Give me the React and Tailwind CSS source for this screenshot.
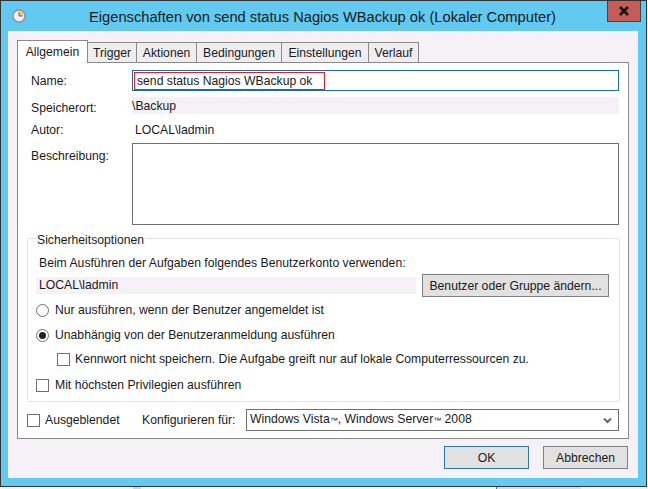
import React from 'react';

const tabs = [
  { name: 'Trigger', width: 'w-[50px]' },
  { name: 'Aktionen', width: 'w-[61px]' },
  { name: 'Bedingungen', width: 'w-[86px]' },
  { name: 'Einstellungen', width: 'w-[88px]' },
  { name: 'Verlauf', width: 'w-[51px]' },
];

function ClockIcon() {
  return (
    <svg width="14" height="14" viewBox="0 0 14 14" className="shrink-0">
      <circle cx="7" cy="7" r="6" fill="#eef1f4" stroke="#8d929b" strokeWidth="1.4" />
      <path d="M7 7V2.4A4.6 4.6 0 0 1 11.6 7Z" fill="#f2c764" />
      <path d="M7 3V7H10.5" fill="none" stroke="#6f6a55" strokeWidth="1" />
    </svg>
  );
}

function CloseIcon() {
  return (
    <svg width="12" height="10" viewBox="0 0 12 10">
      <path d="M2 1L10 9M10 1L2 9" fill="none" stroke="#111" strokeWidth="2.6" />
    </svg>
  );
}

function Radio({ checked }) {
  return (
    <span className="w-[13px] h-[13px] rounded-full border border-[#707070] bg-white flex items-center justify-center shrink-0">
      {checked && <span className="w-[7px] h-[7px] rounded-full bg-[#222]" />}
    </span>
  );
}

function Checkbox() {
  return <span className="w-[13px] h-[13px] border border-[#707070] bg-white shrink-0" />;
}

function Label({ children }) {
  return <div className="w-[116px] pl-[13px] shrink-0">{children}</div>;
}

export default function App() {
  return (
    <div className="w-[648px] h-[489px] overflow-hidden bg-[#f3f3f3] text-[12.2px] leading-[16px] text-[#1a1a1a] font-['Liberation_Sans',Arial,sans-serif]">
      <div className="w-[647px] h-[487px] border border-[#333] bg-[#62c9f0] flex flex-col">
        {/* Titelleiste */}
        <div className="h-[30px] flex items-center shrink-0 pl-[11px]">
          <ClockIcon />
          <div className="flex-1 text-center text-[14.7px] leading-[20px] pl-[14px] pr-[2px] pt-[1px]">
            Eigenschaften von send status Nagios WBackup ok (Lokaler Computer)
          </div>
          <div className="w-[34px] h-[21px] mr-[5px] self-start bg-[#c75b55] border border-[#444] border-t-0 flex items-center justify-center">
            <CloseIcon />
          </div>
        </div>

        {/* Inhalt */}
        <div className="flex-1 ml-[7px] mr-[8px] mb-[8px] bg-[#f5f1f6] px-[9px] pt-[9px] flex flex-col">
          <div className="flex items-end h-[23px] relative z-10">
            <div className="w-[71px] h-[23px] bg-white border border-b-0 border-[#8a8a8a] flex items-center justify-center">
              Allgemein
            </div>
            {tabs.map((tab) => (
              <div
                key={tab.name}
                className={`${tab.width} h-[21px] bg-[#f0edf1] border border-[#8a8a8a] -ml-px pt-[1px] flex items-center justify-center`}
              >
                {tab.name}
              </div>
            ))}
          </div>

          <div className="h-[377px] -mt-px bg-white border border-[#8a8a8a] pt-[7px] flex flex-col">
            <div className="flex items-center h-[21px]">
              <Label>Name:</Label>
              <div className="w-[487px] -ml-[2px] h-[21px] border border-[#1d6a9c] px-px pt-[1px]">
                <div className="w-[191px] h-[18px] border border-[#e3202a] pl-[2px] leading-[16px]">
                  send status Nagios WBackup ok
                </div>
              </div>
            </div>
            <div className="flex items-center h-[17px] mt-[6px]">
              <div className="w-[116px] pl-[13px] pt-[5px] shrink-0">Speicherort:</div>
              <div className="w-[487px] -ml-[2px] h-[17px] bg-[#f5f1f6] pt-[1px]">\Backup</div>
            </div>
            <div className="flex items-center h-[16px] mt-[8px]">
              <Label>Autor:</Label>
              <div className="pl-[1px]">LOCAL\ladmin</div>
            </div>
            <div className="flex mt-[5px]">
              <div className="w-[116px] pl-[13px] pt-[5px] shrink-0">Beschreibung:</div>
              <div className="w-[487px] -ml-[2px] h-[82px] border border-[#707070]" />
            </div>

            {/* Sicherheitsoptionen */}
            <fieldset className="mt-[5px] ml-[9px] w-[593px] h-[172px] border border-[#dce5ec] rounded-[3px] pl-[8px] pb-0">
              <legend className="ml-0 px-[1px] translate-y-[2px]">Sicherheitsoptionen</legend>
              <div className="pl-[3px] mt-[9px]">Beim Ausführen der Aufgaben folgendes Benutzerkonto verwenden:</div>
              <div className="flex items-center mt-[3px]">
                <div className="w-[380px] h-[17px] bg-[#f5f1f6] pl-[3px]">LOCAL\ladmin</div>
                <div className="ml-[6px] w-[187px] h-[23px] bg-[#e1e1e1] border border-[#808080] flex items-center justify-center">
                  Benutzer oder Gruppe ändern...
                </div>
              </div>
              <div className="flex items-center gap-[6px] mt-[5px]">
                <Radio />
                <span>Nur ausführen, wenn der Benutzer angemeldet ist</span>
              </div>
              <div className="flex items-center gap-[6px] mt-[9px]">
                <Radio checked />
                <span>Unabhängig von der Benutzeranmeldung ausführen</span>
              </div>
              <div className="flex items-center gap-[5px] mt-[8px] ml-[21px]">
                <Checkbox />
                <span>Kennwort nicht speichern. Die Aufgabe greift nur auf lokale Computerressourcen zu.</span>
              </div>
              <div className="flex items-center gap-[6px] mt-[10px]">
                <Checkbox />
                <span>Mit höchsten Privilegien ausführen</span>
              </div>
            </fieldset>

            <div className="flex items-center h-[22px] mt-[7px] ml-[9px]">
              <Checkbox />
              <span className="ml-[5px] w-[97px]">Ausgeblendet</span>
              <span className="w-[104px]">Konfigurieren für:</span>
              <div className="w-[373px] h-[22px] border border-[#707070] flex items-center justify-between pl-[3px] pr-[6px]">
                <span>
                  Windows Vista<span className="text-[8px]">™</span>, Windows Server<span className="text-[8px]">™</span> 2008
                </span>
                <svg width="9" height="7" viewBox="0 0 9 7">
                  <path d="M1 1.5L4.5 5L8 1.5" fill="none" stroke="#666" strokeWidth="2" />
                </svg>
              </div>
            </div>
          </div>

          {/* Schaltflächen */}
          <div className="flex justify-end gap-[14px] mt-[7px] mr-[1px]">
            <div className="w-[85px] h-[23px] bg-[#e1e1e1] border border-[#2e76ae] flex items-center justify-center">OK</div>
            <div className="w-[85px] h-[23px] bg-[#e1e1e1] border border-[#808080] flex items-center justify-center">Abbrechen</div>
          </div>
        </div>
      </div>

      {/* Reste vom Fenster dahinter */}
      <div className="h-[2px] flex">
        <div className="w-[133px] h-full" />
        <div className="w-[8px] h-full bg-[#c5d5dc]" />
        <div className="w-[355px] h-full" />
        <div className="w-[85px] h-full bg-[#d8dcd8] border-l border-[#2e76ae]" />
      </div>
    </div>
  );
}
